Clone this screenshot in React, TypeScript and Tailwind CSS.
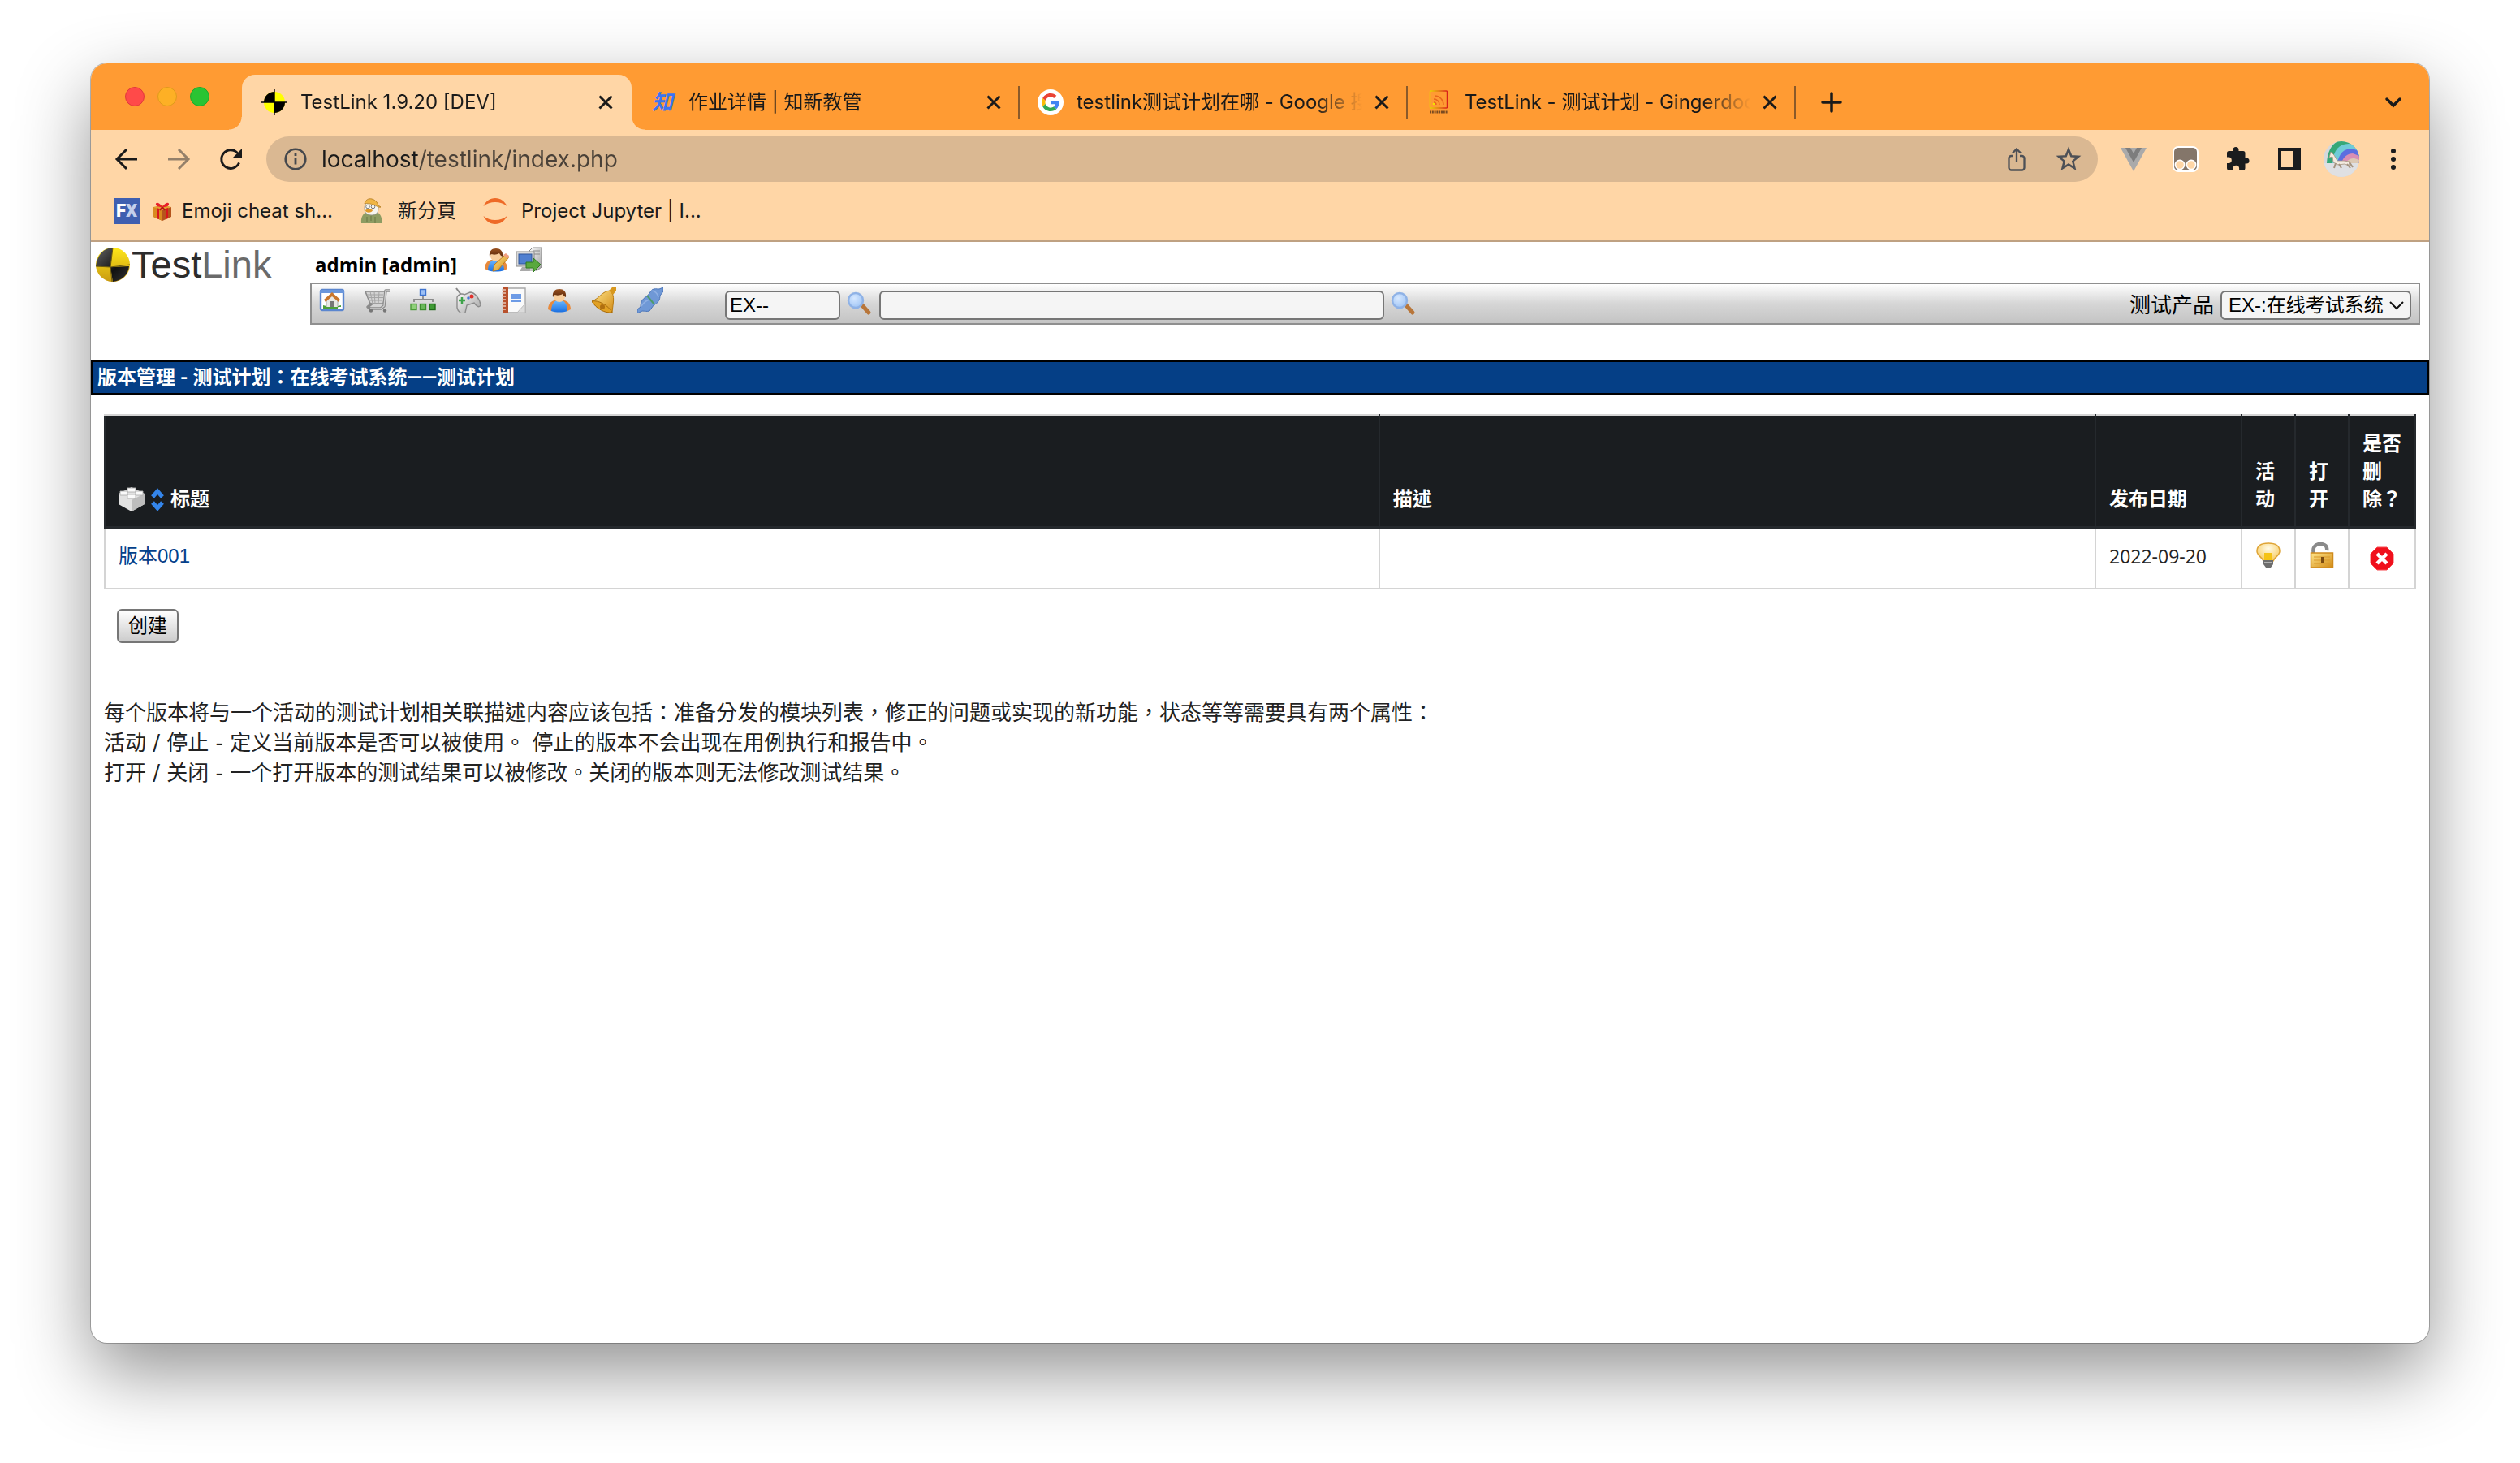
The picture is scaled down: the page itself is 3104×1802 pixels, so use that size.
import type { ReactNode } from "react";

const UI = 'font-["Inter","Noto_Sans_CJK_SC",sans-serif]';

/* ---------- browser icons ---------- */

function Svg({ size, box = 32, children }: { size?: string; box?: number; children: ReactNode }) {
  return (
    <svg viewBox={`0 0 ${box} ${box}`} className={(size ?? "size-8") + " shrink-0"} fill="none" aria-hidden="true">
      {children}
    </svg>
  );
}

const CloseIcon = () => (
  <Svg size="size-8">
    <path d="M8.5 8.5l15 15M23.5 8.5l-15 15" stroke="#1a1a1a" strokeWidth="3" />
  </Svg>
);

const TestLinkFavicon = () => (
  <Svg>
    <circle cx="16" cy="16" r="13" fill="#ff0" />
    <path d="M16 16V3A13 13 0 0 0 3 16zM16 16v13a13 13 0 0 0 13-13z" fill="#000" />
    <path d="M16 0v32M0 16h32" stroke="#000" strokeWidth="1.4" />
  </Svg>
);

const ZhiFavicon = () => (
  <span aria-hidden="true" className="size-8 shrink-0 text-center text-[26px] leading-8 font-bold text-[#3b74f2] italic">
    知
  </span>
);

const GoogleFavicon = () => (
  <Svg>
    <circle cx="16" cy="16" r="16" fill="#fff" />
    <g transform="translate(5 5) scale(.458)">
      <path fill="#EA4335" d="M24 9.5c3.54 0 6.71 1.22 9.21 3.6l6.85-6.85C35.9 2.38 30.47 0 24 0 14.62 0 6.51 5.38 2.56 13.22l7.98 6.19C12.43 13.72 17.74 9.5 24 9.5z" />
      <path fill="#4285F4" d="M46.98 24.55c0-1.57-.15-3.09-.38-4.55H24v9.02h12.94c-.58 2.96-2.26 5.48-4.78 7.18l7.73 6c4.51-4.18 7.09-10.36 7.09-17.65z" />
      <path fill="#FBBC05" d="M10.53 28.59c-.48-1.45-.76-2.99-.76-4.59s.27-3.14.76-4.59l-7.98-6.19C.92 16.46 0 20.12 0 24c0 3.88.92 7.54 2.56 10.78l7.97-6.19z" />
      <path fill="#34A853" d="M24 48c6.48 0 11.93-2.13 15.89-5.81l-7.73-6c-2.15 1.45-4.92 2.3-8.16 2.3-6.26 0-11.57-4.22-13.47-9.91l-7.98 6.19C6.51 42.62 14.62 48 24 48z" />
    </g>
  </Svg>
);

const GingerFavicon = () => (
  <Svg>
    <defs>
      <linearGradient id="ging" x1="0" x2="1">
        <stop offset="0" stopColor="#e6d800" />
        <stop offset="1" stopColor="#d8201a" />
      </linearGradient>
    </defs>
    <rect x="5.5" y="2" width="21" height="21" rx="1" stroke="url(#ging)" strokeWidth="1.5" />
    <path d="M11 8a11 11 0 0 1 11 11M10 12a7 7 0 0 1 7 7M10 16a3 3 0 0 1 3 3" stroke="#e8661c" strokeWidth="1.4" />
    <circle cx="10" cy="18" r="1.3" fill="#f2e400" />
    <path d="M5 28h22" stroke="#7a4a20" strokeWidth="3" strokeDasharray="2 .8" />
  </Svg>
);

const BackIcon = () => (
  <Svg>
    <path d="M29 16H4M16 4L4 16l12 12" stroke="#1a1a1a" strokeWidth="3" />
  </Svg>
);
const ForwardIcon = () => (
  <Svg>
    <path d="M3 16h25M16 4l12 12-12 12" stroke="#94806a" strokeWidth="3" />
  </Svg>
);
const ReloadIcon = () => (
  <Svg>
    <path d="M26.5 20.5A11.3 11.3 0 1 1 24.5 8.5" stroke="#1a1a1a" strokeWidth="3" />
    <path d="M30 3v11.5H18.5z" fill="#1a1a1a" />
  </Svg>
);
const InfoIcon = () => (
  <Svg>
    <circle cx="16" cy="16" r="12.3" stroke="#45484d" strokeWidth="2.6" />
    <path d="M16 14.5v8M16 9v3" stroke="#45484d" strokeWidth="2.8" />
  </Svg>
);
const ShareIcon = () => (
  <Svg>
    <path d="M12 12H9.500a3 3 0 0 0-3 3v11.500a3 3 0 0 0 3 3h13a3 3 0 0 0 3-3V15a3 3 0 0 0-3-3H20M16 20V4M11 8.500l5-5 5 5" stroke="#4d5056" strokeWidth="2.3" />
  </Svg>
);
const StarIcon = () => (
  <Svg>
    <path d="M16 4l3.300 8.300 8.900.6-6.900 5.700 2.200 8.700L16 22.600l-7.500 4.700 2.200-8.700-6.900-5.700 8.900-.6z" stroke="#4d5056" strokeWidth="2.500" />
  </Svg>
);
const VueIcon = () => (
  <Svg>
    <path d="M0 2h32L16 31z" fill="#aaa" />
    <path d="M6 2h6l4 7 4-7h6L16 20z" fill="#7d7d7d" />
  </Svg>
);
const MonkeyIcon = () => (
  <Svg>
    <rect x="1" y="1" width="30" height="30" rx="6" fill="#84766a" stroke="#fff" strokeWidth="2" />
    <circle cx="9" cy="23" r="5.600" fill="#ffd6a6" stroke="#fff" strokeWidth="1.600" />
    <circle cx="23" cy="23" r="5.600" fill="#ffd6a6" stroke="#fff" strokeWidth="1.600" />
  </Svg>
);
const PuzzleIcon = () => (
  <Svg>
    <path
      d="M27 14.500h-1.500V8.500a2.500 2.500 0 0 0-2.500-2.500h-5.500V4.500a3.500 3.500 0 0 0-7 0V6H5.500A2.500 2.500 0 0 0 3 8.500v5h2a3.800 3.800 0 0 1 0 7.600H3v6A2.500 2.500 0 0 0 5.500 29.600h5v-2a3.800 3.800 0 0 1 7.600 0v2H23a2.500 2.500 0 0 0 2.500-2.500v-5.600H27a3.500 3.500 0 0 0 0-7z"
      fill="#1a1c1e"
    />
  </Svg>
);
const PanelIcon = () => (
  <Svg>
    <path d="M2 2h28v28H2z" fill="#1a1c1e" />
    <path d="M6 6h14v20H6z" fill="#ffd6a6" />
  </Svg>
);
const DotsIcon = () => (
  <Svg>
    <circle cx="16" cy="6" r="3" fill="#1a1c1e" />
    <circle cx="16" cy="16" r="3" fill="#1a1c1e" />
    <circle cx="16" cy="26" r="3" fill="#1a1c1e" />
  </Svg>
);
const AvatarIcon = () => (
  <Svg size="size-11" box={44}>
    <defs>
      <clipPath id="avatar-clip">
        <circle cx="22" cy="22" r="22" />
      </clipPath>
    </defs>
    <g clipPath="url(#avatar-clip)">
      <path d="M0 0h44v44H0z" fill="#d6d8dc" />
      <path d="M4 27C5 8 14-3 30-3h14v30z" fill="#36a878" />
      <path d="M11 27C12 11 19 3 31 3l13 1v23z" fill="#6fcbd8" />
      <path d="M17 27c2-12 8-18 18-18l9 3v15z" fill="#5b6ee0" />
      <path d="M22 27c2-8 8-12 14-12l8 3v9z" fill="#d98fb4" />
      <path d="M27 27c3-5 7-6 11-6l6 2v5z" fill="#dcc9b4" />
      <path d="M0 27h44v17H0z" fill="#dfe0e3" />
      <path d="M9 13l4 4 4 7 8 0 7 1-1 5-5-2-8 1-6-3-1-7-4 1z" fill="#f3ebdf" stroke="#a4937f" strokeWidth=".8" />
      <path d="M15 27l-2 6M19 28l3 5M29 28l4 5M32 26l4 6" stroke="#a4937f" strokeWidth="2" />
    </g>
  </Svg>
);

/* ---------- bookmark icons ---------- */

const FxIcon = () => (
  <span className="flex size-8 shrink-0 items-center justify-center bg-[#3f5fb0] font-['Roboto',sans-serif] text-[22px] leading-8 font-black text-white">
    F<span className="text-[#c3cfec]">X</span>
  </span>
);
const GiftIcon = () => (
  <Svg size="size-6" box={24}>
    <path d="M1 7l11 3 11-3v12l-11 5-11-5z" fill="#b5541c" />
    <path d="M1 7l11 3v14L1 19z" fill="#d98a1e" />
    <path d="M1 7l11-3 11 3-11 4z" fill="#e5a032" />
    <path d="M5 8l3 1v13l-3-1zM16 9l3-1v13l-3 1z" fill="#d8151c" />
    <path d="M12 7C8 0 3 1 4 4s5 3 8 3c3 0 7 0 8-3s-4-4-8 3z" fill="#e8202a" />
    <path d="M12 7l-3 4M12 7l3 4" stroke="#b80f18" strokeWidth="2" />
  </Svg>
);
const DuckIcon = () => (
  <Svg>
    <path d="M3 31c-1-8 3-13 7-14h11c5 1 8 6 7 14z" fill="#8e9c62" />
    <path d="M7 13c0-6 3-10 8-10s9 4 9 10c0 5-3 8-8 8-6 0-9-3-9-8z" fill="#f7f5ef" stroke="#8a8a80" strokeWidth=".8" />
    <path d="M7 7c1-5 5-7 9-6s7 4 8 8l3 2c-3 1-6-2-9-3S10 6 7 7z" fill="#f0b545" stroke="#b07a20" strokeWidth=".8" />
    <path d="M8 15c2-2 7-2 9 0 0 3-9 4-9 0z" fill="#e09a2a" />
    <circle cx="11" cy="10.500" r="2.300" stroke="#777" />
    <circle cx="17.500" cy="10.500" r="2.300" stroke="#777" />
    <path d="M10 23v7M15 22v6M20 23v8" stroke="#6f7d48" strokeWidth="1.200" />
  </Svg>
);
const JupyterIcon = () => (
  <Svg>
    <path d="M1.500 10C4 4 9.500 0 16 0s12 4 14.500 10C26.500 6.500 21.500 5 16 5S5.500 6.500 1.500 10z" fill="#ee6a27" />
    <path d="M1.500 22C4 28 9.500 32 16 32s12-4 14.500-10C26.500 25.500 21.500 27 16 27S5.500 25.500 1.500 22z" fill="#ee6a27" />
  </Svg>
);

/* ---------- TestLink icons ---------- */

const SharedDefs = () => (
  <svg className="absolute size-0" aria-hidden="true">
    <defs>
      <linearGradient id="yel" x1="0" y1="0" x2="0" y2="1">
        <stop offset="0" stopColor="#ffe818" />
        <stop offset="1" stopColor="#c99a10" />
      </linearGradient>
      <linearGradient id="blk" x1="0" y1="0" x2="1" y2="1">
        <stop offset="0" stopColor="#666" />
        <stop offset=".6" stopColor="#111" />
        <stop offset="1" stopColor="#333" />
      </linearGradient>
      <linearGradient id="gold" x1="0" y1="0" x2="1" y2="1">
        <stop offset="0" stopColor="#ffe58a" />
        <stop offset="1" stopColor="#d28a14" />
      </linearGradient>
      <linearGradient id="shirt" x1="0" y1="0" x2="0" y2="1">
        <stop offset="0" stopColor="#6db8ff" />
        <stop offset="1" stopColor="#1a6fe0" />
      </linearGradient>
      <linearGradient id="hair" x1="0" y1="0" x2="0" y2="1">
        <stop offset="0" stopColor="#9a5220" />
        <stop offset="1" stopColor="#5e2a0c" />
      </linearGradient>
      <linearGradient id="metal" x1="0" y1="0" x2="1" y2="1">
        <stop offset="0" stopColor="#fafafa" />
        <stop offset="1" stopColor="#a2a2a2" />
      </linearGradient>
      <radialGradient id="lens" cx=".4" cy=".35" r=".7">
        <stop offset="0" stopColor="#d6e8ff" />
        <stop offset="1" stopColor="#9fc4f5" />
      </radialGradient>
      <radialGradient id="glow" cx=".5" cy=".3" r=".7">
        <stop offset="0" stopColor="#fffbe8" />
        <stop offset="1" stopColor="#f7c95a" />
      </radialGradient>
    </defs>
  </svg>
);

const LogoMark = () => (
  <Svg size="size-11" box={44}>
    <circle cx="21" cy="22" r="21" fill="url(#yel)" />
    <path d="M18 25L21 1C10 1 2 10 0 24zM18 25l23-1c-1 10-9 18-20 19z" fill="url(#blk)" />
    <path d="M21 1l-3 24 2 18M0 24l18 1 24-3" stroke="#6b5a10" strokeWidth="1" />
  </Svg>
);

const Person = () => (
  <>
    <path d="M2 27c0-5 3-10 8-11h12c5 1 8 6 8 11l-4 2H6z" fill="#e88a3c" />
    <path d="M6 29c0-7 3-12 7-13h6c4 1 7 6 7 13-6 2-14 2-20 0z" fill="url(#shirt)" />
    <circle cx="16" cy="11" r="7" fill="#f9cf9e" />
    <path d="M8 12c-1-7 3-10 8-10s9 3 8 10c-2-1-3-2-4-4-3 2-8 2-10 1-1 1-1 2-2 3z" fill="url(#hair)" />
  </>
);

const UserIcon = () => (
  <Svg>
    <Person />
  </Svg>
);
const UserEditIcon = () => (
  <Svg>
    <Person />
    <path d="M12 30l2-8 13-12c2-1 5 1 4 4L19 28z" fill="url(#gold)" stroke="#c07a18" strokeWidth="1" />
    <path d="M25 10l3-2 4 3-2 4z" fill="#f0a080" />
  </Svg>
);
const LogoutIcon = () => (
  <Svg>
    <path d="M17 5l4-4h11v24l-5 4H17z" fill="url(#metal)" stroke="#8a8a8a" />
    <path d="M22 5h8M22 9h8" stroke="#888" />
    <rect x="1" y="6" width="22" height="18" fill="#d9d9d9" stroke="#888" />
    <rect x="4" y="9" width="16" height="12" fill="#4f7fd0" stroke="#31569a" />
    <path d="M8 25h8l2 5H5z" fill="#aaa" />
    <path d="M13 19h9v-5l9 8-9 9v-5h-9z" fill="#5aa83e" stroke="#2f7a1e" />
  </Svg>
);
const HomeIcon = () => (
  <Svg>
    <rect x="2" y="3" width="28" height="25" rx="2" fill="#fff" stroke="#5b86cf" strokeWidth="2.400" />
    <path d="M1 3h30v4H1z" fill="#6b97dc" />
    <path d="M9 15l7-6 7 6v10H9z" fill="#e8e8e4" stroke="#999" strokeWidth=".8" />
    <path d="M6 15l10-9 10 9-2 3-8-7-8 7z" fill="#c9762c" />
    <path d="M14 17h4v8h-4z" fill="#777" />
    <path d="M5 22l4 1v3H5zM27 22l-4 1v3h4zM5 24h22v2H5z" fill="#4da03a" />
  </Svg>
);
const CartIcon = () => (
  <Svg>
    <path d="M1 5h25l-3 15H7z" fill="#d2d2d2" stroke="#8c8c8c" strokeWidth="1.600" />
    <path d="M3 9h20M4 12.500h19M5 16h17M7 5l3 15M12 5l1 15M18 5l-1 15" stroke="#a4a4a4" />
    <path d="M31 4h-5l-2 19-4 3H7l-3-2 5-4" stroke="#8a8a8a" strokeWidth="3.500" strokeLinejoin="round" />
    <path d="M31 4h-5l-2 19-4 3H7" stroke="#cfcfcf" strokeWidth="1.400" strokeLinejoin="round" />
    <circle cx="8" cy="28.500" r="2.200" fill="#777" />
    <circle cx="25" cy="28.500" r="2.200" fill="#777" />
  </Svg>
);
const TreeIcon = () => (
  <Svg>
    <path d="M16 11v4M5 18v-3h23v3" stroke="#8a8a8a" strokeWidth="1.800" />
    <rect x="12.500" y="2.500" width="7" height="7" fill="#9cc0f5" stroke="#3f74cf" strokeWidth="1.400" />
    <rect x="1" y="20.500" width="7" height="7" fill="#8fd07a" stroke="#4b9c38" strokeWidth="1.400" />
    <rect x="12.500" y="20.500" width="7" height="7" fill="#6ab85a" stroke="#3c8c2c" strokeWidth="1.400" />
    <rect x="24" y="20.500" width="7" height="7" fill="#3f9a34" stroke="#1e6b18" strokeWidth="1.400" />
  </Svg>
);
const GamepadIcon = () => (
  <Svg>
    <path d="M1 1l6 8" stroke="#888" strokeWidth="2" />
    <path d="M2 12c2-4 6-5 9-3l7-3c6 0 12 8 13 16-2 4-6 0-8-3l-9 3-2 9c-4 3-9-1-10-6z" fill="url(#metal)" stroke="#8c8c8c" strokeWidth="1.400" />
    <path d="M8 12v8M4 16h8" stroke="#3ea34a" strokeWidth="2.500" />
    <circle cx="20" cy="11" r="2.500" fill="#e0302c" />
    <circle cx="16" cy="13" r="1.800" fill="#4a78d8" />
  </Svg>
);
const NotebookIcon = () => (
  <Svg>
    <path d="M3 1h27v30H3z" fill="#fafafa" stroke="#a8a8a8" strokeWidth="1.400" />
    <path d="M3 0h6v32H3z" fill="#b8512c" />
    <path d="M1 3h5M1 7h5M1 11h5M1 15h5M1 19h5M1 23h5M1 27h5" stroke="#e5c8b8" strokeWidth="1.600" />
    <path d="M13 8h12v6H13z" fill="#6d9be6" />
    <path d="M13 17h12" stroke="#6d9be6" strokeWidth="2" />
    <path d="M20 31l10-11v11z" fill="#dcdcdc" stroke="#bbb" />
  </Svg>
);
const BellIcon = () => (
  <Svg>
    <path d="M0 17C9 14 13 4 23 4c6 7 3 15 2 27-8 0-20-5-25-14z" fill="url(#gold)" stroke="#b87a10" strokeWidth="1" />
    <path d="M0 17c7-2 21 5 25 14-9 1-20-5-25-14z" fill="#e0a024" stroke="#a86c0c" />
    <path d="M21 4l4-4h5v4l-4 5z" fill="#d8981e" />
    <circle cx="13" cy="24" r="3" fill="#b06f10" />
  </Svg>
);
const PlugIcon = () => (
  <Svg>
    <path d="M0 32v-5l4-3c0-4 1-10 8-13l6-8c3-2 6-1 9-1l5-2v5l-4 5c0 5-2 9-8 12l-5 7c-3 1-6 0-9 0z" fill="#6f98d6" stroke="#4a74b8" strokeWidth="1" />
    <path d="M17 4c4 0 8 3 9 8M5 23c4-6 8-8 12-8" stroke="#8fb0e4" strokeWidth="1.500" />
    <path d="M12 10l9 11" stroke="#4f9c6a" strokeWidth="2" />
  </Svg>
);
const SearchIcon = () => (
  <Svg>
    <path d="M19 18l8 9" stroke="#b8763a" strokeWidth="5" strokeLinecap="round" />
    <circle cx="11" cy="12" r="9" fill="url(#lens)" stroke="#8fb2e6" strokeWidth="2.500" />
  </Svg>
);
const BrickIcon = () => (
  <Svg>
    <path d="M0 9l16-8 16 8v13l-16 9-16-9z" fill="#e2e2e2" />
    <path d="M16 17l16-8v13l-16 9z" fill="#bdbdbd" />
    <g fill="#fafafa" stroke="#b0b0b0" strokeWidth=".9">
      <path d="M11 2h10v5H11zM2 6h9v5H2zM21 6h9v5h-9zM11 10h10v5H11z" />
    </g>
  </Svg>
);
const SortIcon = () => (
  <svg viewBox="0 0 16 32" className="h-8 w-4" fill="none" aria-hidden="true">
    <path d="M2 13l6-7 6 7M2 20l6 7 6-7" stroke="#3485ea" strokeWidth="5" />
  </svg>
);
const BulbIcon = () => (
  <Svg>
    <path d="M2 11C2 4 8 1 16 1s14 3 14 10c0 5-6 7-8 12H10C8 18 2 16 2 11z" fill="url(#glow)" stroke="#dfa436" strokeWidth="1.500" />
    <path d="M11 13h10v9H11z" fill="#f5c316" />
    <path d="M10 22h12v5l-3 4h-6l-3-4z" fill="#6d6d6d" />
    <path d="M11 25h10" stroke="#c8c8c8" strokeWidth="1.500" />
  </Svg>
);
const UnlockIcon = () => (
  <Svg>
    <path d="M6 14c-2-7 1-12 8-12 6 0 9 3 8 8" stroke="#8a8a8a" strokeWidth="4.500" />
    <rect x="2.500" y="13" width="27" height="18" fill="url(#gold)" stroke="#cf8a1c" strokeWidth="1.500" />
    <path d="M6 18h20M6 22h20M6 26h20" stroke="#d99a2c" strokeWidth="1.200" />
    <path d="M15 18h3v7h-3z" fill="#7a4a10" />
  </Svg>
);
const DeleteIcon = () => (
  <Svg>
    <path d="M10 2h12l8 8v12l-8 8H10l-8-8V10z" fill="#f0101c" stroke="#f84a50" strokeWidth="1" />
    <path d="M10 10l12 12M22 10L10 22" stroke="#fff" strokeWidth="4.500" />
  </Svg>
);

/* ---------- browser chrome ---------- */

const inactiveTabs = [
  { title: "作业详情 | 知新教管", icon: <ZhiFavicon /> },
  { title: "testlink测试计划在哪 - Google 搜尋", icon: <GoogleFavicon /> },
  { title: "TestLink - 测试计划 - Gingerdoc", icon: <GingerFavicon /> },
];

function TabBody({ title, icon }: { title: string; icon: ReactNode }) {
  return (
    <>
      {icon}
      <button
        type="button"
        className="mr-2 ml-4 min-w-0 flex-1 overflow-hidden text-left whitespace-nowrap [mask-image:linear-gradient(to_right,#000_calc(100%-60px),transparent)]"
      >
        {title}
      </button>
      <button type="button" aria-label="关闭标签页">
        <CloseIcon />
      </button>
    </>
  );
}

function TabStrip() {
  return (
    <div className="flex h-[82px] items-end bg-[#ff9b33] pr-7 text-[24px] leading-8 text-[#1a1a1a]">
      <div className="flex h-[82px] w-[186px] items-center gap-4 pl-[42px]">
        <span className="size-6 rounded-full border border-[#e0383b] bg-[#ff4a49]" />
        <span className="size-6 rounded-full border border-[#df9a1c] bg-[#fdb025]" />
        <span className="size-6 rounded-full border border-[#1fa82a] bg-[#2ac433]" />
      </div>
      <div className="relative flex h-[68px] w-[480px] items-center rounded-t-2xl bg-[#ffd6a6] pr-4 pl-6">
        <span className="absolute bottom-0 -left-4 size-4 bg-[radial-gradient(circle_at_0_0,transparent_15px,#ffd6a6_16px)]" />
        <span className="absolute -right-4 bottom-0 size-4 bg-[radial-gradient(circle_at_100%_0,transparent_15px,#ffd6a6_16px)]" />
        <TabBody title="TestLink 1.9.20 [DEV]" icon={<TestLinkFavicon />} />
      </div>
      {inactiveTabs.map((t) => (
        <div key={t.title} className="flex h-[68px] w-[478px] items-center">
          <div className="flex min-w-0 flex-1 items-center pr-[14px] pl-[22px]">
            <TabBody {...t} />
          </div>
          <span className="h-10 w-[2px] bg-[#8a5a2a]" />
        </div>
      ))}
      <button type="button" aria-label="新标签页" className="ml-7 flex h-[68px] items-center">
        <Svg>
          <path d="M16 5v22M5 16h22" stroke="#1a1a1a" strokeWidth="3.500" strokeLinecap="round" />
        </Svg>
      </button>
      <button type="button" aria-label="搜索标签页" className="ml-auto flex h-[68px] items-center">
        <Svg>
          <path d="M8 12l8 8 8-8" stroke="#1a1a1a" strokeWidth="3.500" strokeLinecap="round" />
        </Svg>
      </button>
    </div>
  );
}

function AddressBar() {
  return (
    <div className="flex items-center bg-[#ffd6a6] px-7 pt-2">
      <div className="flex gap-8">
        <button type="button" aria-label="后退"><BackIcon /></button>
        <button type="button" aria-label="前进"><ForwardIcon /></button>
        <button type="button" aria-label="刷新"><ReloadIcon /></button>
      </div>
      <div className="ml-7 flex h-14 flex-1 items-center rounded-full bg-[#dab892] pr-5 pl-5">
        <InfoIcon />
        <input
          aria-label="地址"
          defaultValue="localhost/testlink/index.php"
          className="ml-4 h-10 min-w-0 flex-1 bg-[linear-gradient(to_right,#1a1a1a_120px,#4a4138_120px)] bg-clip-text text-[28px] text-transparent outline-none"
        />
        <button type="button" aria-label="分享"><ShareIcon /></button>
        <button type="button" aria-label="收藏" className="ml-8"><StarIcon /></button>
      </div>
      <div className="ml-7 flex items-center gap-8">
        <button type="button" aria-label="Vue"><VueIcon /></button>
        <button type="button" aria-label="Tampermonkey"><MonkeyIcon /></button>
        <button type="button" aria-label="扩展程序"><PuzzleIcon /></button>
        <button type="button" aria-label="侧边栏"><PanelIcon /></button>
        <button type="button" aria-label="个人资料" className="-mx-[6px]"><AvatarIcon /></button>
        <button type="button" aria-label="菜单"><DotsIcon /></button>
      </div>
    </div>
  );
}

function BookmarksBar() {
  return (
    <nav className="flex h-[74px] items-center border-b-2 border-[#bfa182] bg-[#ffd6a6] pl-7 text-[24px] text-[#1a1a1a]">
      <a href="#fx" aria-label="FX"><FxIcon /></a>
      <a href="#emoji" className="ml-4 flex items-center gap-3"><GiftIcon />Emoji cheat sh...</a>
      <a href="#newtab" className="ml-8 flex items-center gap-4"><DuckIcon />新分頁</a>
      <a href="#jupyter" className="ml-8 flex items-center gap-4"><JupyterIcon />Project Jupyter | I...</a>
    </nav>
  );
}

/* ---------- TestLink page ---------- */

const menu = [
  { label: "主页", icon: <HomeIcon /> },
  { label: "需求", icon: <CartIcon /> },
  { label: "测试用例", icon: <TreeIcon /> },
  { label: "执行", icon: <GamepadIcon /> },
  { label: "报告", icon: <NotebookIcon /> },
  { label: "用户管理", icon: <UserIcon /> },
  { label: "事件", icon: <BellIcon /> },
  { label: "插件", icon: <PlugIcon /> },
];

const fieldClass = "mt-1 h-9 rounded-md border-2 border-[#767676] bg-[#f5f5f5] px-1 text-[24px] text-black";

function PageHeader() {
  return (
    <header className="flex pr-[11px]">
      <div className="flex w-[270px] items-start pt-[6px] pl-[6px]">
        <LogoMark />
        <span className="font-['Liberation_Sans',sans-serif] text-[47px] leading-11 text-[#2c2c2c]">
          Test<span className="text-[#6a6a6a]">Link</span>
        </span>
      </div>
      <div className="min-w-0 flex-1">
        <div className="flex h-[50px] items-start pt-[6px] pl-[6px]">
          <span className="mt-1 mr-8 font-['Open_Sans',sans-serif] text-[24px] leading-9 font-bold text-black">admin [admin]</span>
          <a href="#profile" aria-label="我的设置"><UserEditIcon /></a>
          <a href="#logout" aria-label="登出" className="ml-2"><LogoutIcon /></a>
        </div>
        <div className="flex h-[52px] items-start border-2 border-[#8f8f8f] bg-linear-to-b from-white via-[#d6d6d6] to-[#c4c4c4] pt-1 pr-[9px] pl-[9px] font-['Liberation_Sans','Noto_Sans_CJK_SC',sans-serif]">
          <nav className="flex gap-6">
            {menu.map((m) => (
              <a key={m.label} href="#menu" aria-label={m.label}>{m.icon}</a>
            ))}
          </nav>
          <form className="ml-[76px] flex gap-2" onSubmit={(e) => e.preventDefault()}>
            <input aria-label="测试用例编号" defaultValue="EX--" className={fieldClass + " w-[142px]"} />
            <button type="button" aria-label="查找用例" className="mt-1 h-8"><SearchIcon /></button>
            <input aria-label="全文搜索" className={fieldClass + " w-[622px]"} />
            <button type="button" aria-label="搜索" className="mt-1 h-8"><SearchIcon /></button>
          </form>
          <label htmlFor="product" className="mt-1 ml-auto text-[26px] leading-9 text-black">测试产品</label>
          <div className="relative ml-2">
            <select id="product" className={fieldClass + " w-[235px] appearance-none pr-8 pl-2 leading-8"}>
              <option>EX-:在线考试系统</option>
            </select>
            <svg viewBox="0 0 20 12" className="pointer-events-none absolute top-4 right-2 h-3 w-5" fill="none" aria-hidden="true">
              <path d="M2 2l8 8 8-8" stroke="#111" strokeWidth="2" />
            </svg>
          </div>
        </div>
      </div>
    </header>
  );
}

const thClass = "border-2 border-b-4 border-[#25292d] border-t-[#d4d4d4] bg-[#1a1d20] px-4 pt-[18px] pb-4 text-left align-bottom font-bold text-white";
const tdClass = "border-2 border-[#d4d4d4] px-4 pt-4 pb-2 align-top";

function BuildsTable() {
  return (
    <table className="w-full table-fixed border-collapse text-[24px] leading-[34px]">
      <colgroup>
        <col />
        <col className="w-[31%]" />
        <col className="w-[180px]" />
        <col className="w-[66px]" />
        <col className="w-[66px]" />
        <col className="w-[82px]" />
      </colgroup>
      <thead>
        <tr>
          <th className={thClass}>
            <span className="flex items-center gap-2">
              <BrickIcon />
              <button type="button" aria-label="排序"><SortIcon /></button>
              标题
            </span>
          </th>
          <th className={thClass}>描述</th>
          <th className={thClass}>发布日期</th>
          <th className={thClass}>活动</th>
          <th className={thClass}>打开</th>
          <th className={thClass}>是否删除？</th>
        </tr>
      </thead>
      <tbody>
        <tr className="h-[75px]">
          <td className={tdClass}><a href="#build" className="text-[#04408a]">版本001</a></td>
          <td className={tdClass} />
          <td className={tdClass + " font-['Open_Sans',sans-serif] text-[23px]"}>2022-09-20</td>
          <td className={tdClass}><button type="button" aria-label="活动" className="block"><BulbIcon /></button></td>
          <td className={tdClass}><button type="button" aria-label="打开" className="block"><UnlockIcon /></button></td>
          <td className={tdClass}><button type="button" aria-label="删除" className="mx-auto mt-1 block"><DeleteIcon /></button></td>
        </tr>
      </tbody>
    </table>
  );
}

export default function App() {
  return (
    <div className="flex min-h-screen flex-col bg-white px-28 pt-[78px] pb-[148px]">
      <SharedDefs />
      <div className={UI + " flex flex-1 flex-col overflow-hidden rounded-[20px] bg-white shadow-[0_0_0_1px_rgba(0,0,0,0.25),0_36px_90px_rgba(0,0,0,0.43)]"}>
        <TabStrip />
        <AddressBar />
        <BookmarksBar />
        <div className="flex-1 font-['Liberation_Sans','Noto_Sans_CJK_TC',sans-serif] text-[#222]">
          <PageHeader />
          <h1 className="mt-11 border-2 border-black bg-[#053f86] px-[6px] font-['Roboto','Noto_Sans_CJK_TC',sans-serif] text-[24px] leading-[38px] font-bold text-white">
            版本管理 - 测试计划：在线考试系统——测试计划
          </h1>
          <main className="px-4 pt-6">
            <BuildsTable />
            <button
              type="button"
              className="mt-6 ml-4 h-[42px] rounded-md border-2 border-[#767676] bg-linear-to-b from-white to-[#cccccc] px-3 text-[24px] leading-8 text-black"
            >
              创建
            </button>
            <p className="mt-[68px] font-['DejaVu_Sans','Noto_Sans_CJK_TC',sans-serif] text-[26px] leading-[37px]">
              每个版本将与一个活动的测试计划相关联描述内容应该包括：准备分发的模块列表，修正的问题或实现的新功能，状态等等需要具有两个属性：
              <br />
              活动 / 停止 - 定义当前版本是否可以被使用。 停止的版本不会出现在用例执行和报告中。
              <br />
              打开 / 关闭 - 一个打开版本的测试结果可以被修改。关闭的版本则无法修改测试结果。
            </p>
          </main>
        </div>
      </div>
    </div>
  );
}
